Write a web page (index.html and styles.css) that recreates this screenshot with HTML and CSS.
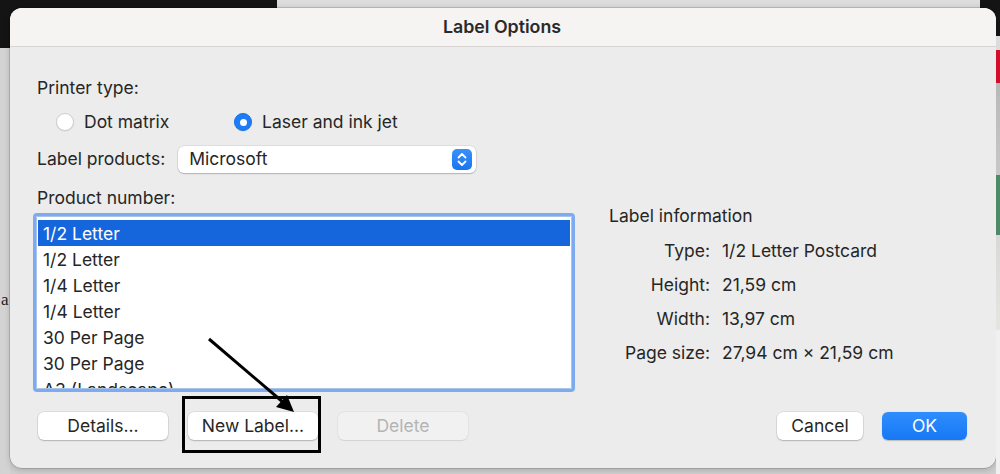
FILE: index.html
```html
<!DOCTYPE html>
<html>
<head>
<meta charset="utf-8">
<title>Label Options</title>
<link rel="stylesheet" href="styles.css">
</head>
<body>
<div class="desk">
  <div class="side-left"><span class="stray">a</span></div>
  <div class="dialog">
    <div class="titlebar">Label Options</div>
    <div class="content">
      <div class="row label-row">Printer type:</div>
      <div class="row radios">
        <label class="radio-opt first"><span class="radio"></span>Dot matrix</label>
        <label class="radio-opt"><span class="radio on"></span>Laser and ink jet</label>
      </div>
      <div class="row products">
        <span>Label products:</span>
        <div class="popup">
          <span class="popup-text">Microsoft</span>
          <span class="stepper">
            <svg width="20" height="21" viewBox="0 0 20 21"><path d="M6.5 8.5 L10 5 L13.5 8.5" fill="none" stroke="#fff" stroke-width="1.8" stroke-linecap="round" stroke-linejoin="round"/><path d="M6.5 12.5 L10 16 L13.5 12.5" fill="none" stroke="#fff" stroke-width="1.8" stroke-linecap="round" stroke-linejoin="round"/></svg>
          </span>
        </div>
      </div>
      <div class="middle">
        <div class="left-col">
          <div class="row label-row">Product number:</div>
          <div class="listbox">
            <div class="list-inner">
              <div class="item sel">1/2 Letter</div>
              <div class="item">1/2 Letter</div>
              <div class="item">1/4 Letter</div>
              <div class="item">1/4 Letter</div>
              <div class="item">30 Per Page</div>
              <div class="item">30 Per Page</div>
              <div class="item">A3 (Landscape)</div>
            </div>
          </div>
        </div>
        <div class="right-col">
          <div class="info-title">Label information</div>
          <div class="info-grid">
            <span class="k">Type:</span><span class="v">1/2 Letter Postcard</span>
            <span class="k">Height:</span><span class="v">21,59 cm</span>
            <span class="k">Width:</span><span class="v">13,97 cm</span>
            <span class="k">Page size:</span><span class="v">27,94 cm × 21,59 cm</span>
          </div>
        </div>
      </div>
      <div class="buttons">
        <div class="btn">Details...</div>
        <div class="btn">New Label...</div>
        <div class="btn disabled">Delete</div>
        <div class="spacer"></div>
        <div class="btn cancel">Cancel</div>
        <div class="btn ok">OK</div>
      </div>
    </div>
  </div>
  <div class="side-right"></div>
</div>
<svg class="annot" width="1000" height="474" viewBox="0 0 1000 474">
  <rect x="183.5" y="397.5" width="136" height="54" fill="none" stroke="#000" stroke-width="3"/>
  <line x1="209" y1="339" x2="284" y2="403" stroke="#000" stroke-width="3"/>
  <path d="M294 412 L276 407 L287 395 Z" fill="#000"/>
</svg>
</body>
</html>
```
FILE: styles.css
```css
html, body {
  margin: 0;
  padding: 0;
}
body {
  width: 1000px;
  height: 474px;
  overflow: hidden;
  position: relative;
  font-family: "Inter", "Liberation Sans", sans-serif;
  color: #262626;
  background:
    linear-gradient(#141414, #141414) 0 0 / 277px 48px no-repeat,
    linear-gradient(#dedede, #d6d6d6) 277px 0 / 703px 8px no-repeat,
    linear-gradient(#141414, #141414) 980px 0 / 20px 36px no-repeat,
    #cfcfcf;
}
.desk {
  display: grid;
  grid-template-columns: 10px 986px 4px;
  height: 474px;
}
.side-left {
  background: linear-gradient(#141414 0, #141414 48px, #d3d3d3 48px, #d3d3d3 100%);
}
.stray {
  display: block;
  margin-top: 290px;
  margin-left: 1px;
  font-family: "Liberation Serif", serif;
  font-size: 17px;
  color: #222;
}
.side-right {
  background: linear-gradient(
    #141414 0, #141414 36px,
    #dcdcdc 36px, #dcdcdc 50px,
    #d0102a 50px, #d0102a 83px,
    #b8b8b8 83px, #c8c8c8 175px,
    #4e8a66 175px, #4e8a66 235px,
    #d8d8d8 235px, #e6e6e0 330px,
    #f0f0f0 330px, #f0f0f0 474px);
}
.dialog {
  margin-top: 8px;
  height: 460px;
  background: #ececec;
  border-radius: 12px;
  box-shadow: 0 0 0 0.5px rgba(0,0,0,0.25), 0 2px 6px rgba(0,0,0,0.18);
  overflow: hidden;
  display: flex;
  flex-direction: column;
}
.titlebar {
  height: 38px;
  line-height: 38px;
  background: #f6f3f3;
  border-bottom: 1px solid #d8d4d4;
  text-align: center;
  font-weight: 600;
  font-size: 17.8px;
  color: #2a2a2a;
  padding-right: 2px;
}
.content {
  flex: 1;
  padding: 29px 29px 0 27px;
  display: flex;
  flex-direction: column;
  font-size: 17.5px;
}
.row {
  height: 24px;
  line-height: 24px;
  display: flex;
  align-items: center;
}
.radios {
  margin-top: 10px;
  padding-left: 19px;
}
.radio-opt {
  display: flex;
  align-items: center;
  gap: 10px;
}
.radio-opt.first {
  width: 178px;
}
.radio {
  width: 18px;
  height: 18px;
  box-sizing: border-box;
  border-radius: 50%;
  background: #fff;
  border: 0.5px solid #cfcfcf;
  box-shadow: 0 0.5px 1px rgba(0,0,0,0.12);
  display: flex;
  align-items: center;
  justify-content: center;
}
.radio.on {
  background: #1b7df7;
  border-color: #1870e6;
}
.radio.on::after {
  content: "";
  width: 7px;
  height: 7px;
  border-radius: 50%;
  background: #fff;
}
.products {
  margin-top: 11px;
  height: 28px;
  gap: 13px;
}
.popup {
  width: 298px;
  height: 27px;
  box-sizing: border-box;
  background: #fff;
  border-radius: 6px;
  box-shadow: 0 0 0 0.5px rgba(0,0,0,0.12), 0 1px 1.5px rgba(0,0,0,0.2);
  display: flex;
  align-items: center;
  padding: 0 4px 0 11px;
}
.popup-text {
  flex: 1;
}
.stepper {
  width: 20px;
  height: 21px;
  border-radius: 5px;
  background: linear-gradient(#3a91fb, #1b74ee);
  display: flex;
}
.middle {
  display: flex;
  margin-top: 13px;
  gap: 34px;
}
.left-col {
  display: flex;
  flex-direction: column;
}
.listbox {
  margin-top: 3px;
  margin-left: -4px;
  width: 542px;
  height: 179px;
  box-sizing: border-box;
  border: 3px solid #7eabef;
  border-radius: 4px;
  background: #fff;
  overflow: hidden;
}
.list-inner {
  height: 100%;
  box-sizing: border-box;
  border: 1px solid #a9c3ea;
  padding-top: 3px;
  overflow: hidden;
}
.item {
  height: 26px;
  line-height: 27px;
  padding-left: 5px;
  margin: 0 1px;
  color: #262626;
}
.item.sel {
  background: #1565dc;
  color: #fff;
}
.right-col {
  padding-top: 18px;
}
.info-title {
  height: 24px;
  line-height: 24px;
}
.info-grid {
  margin-top: 6px;
  display: grid;
  grid-template-columns: 101px auto;
  column-gap: 12px;
  grid-auto-rows: 34px;
  line-height: 34px;
}
.k {
  text-align: right;
}
.buttons {
  margin-top: 20px;
  display: flex;
  gap: 20px;
  margin-left: 1px;
}
.spacer {
  flex: 1;
}
.btn {
  width: 130px;
  height: 28px;
  line-height: 28px;
  box-sizing: border-box;
  text-align: center;
  background: #fff;
  border-radius: 6px;
  box-shadow: 0 0 0 0.5px rgba(0,0,0,0.12), 0 1px 1.5px rgba(0,0,0,0.2);
  color: #262626;
}
.btn.disabled {
  background: #f1f1f1;
  color: #b4b4b4;
  box-shadow: 0 0 0 0.5px rgba(0,0,0,0.06), 0 0.5px 1px rgba(0,0,0,0.08);
}
.btn.cancel {
  width: 86px;
}
.btn.ok {
  width: 85px;
  margin-left: -1px;
  background: linear-gradient(#2f8dfd, #1778f5);
  color: #fff;
  box-shadow: 0 0.5px 1px rgba(0,0,0,0.2);
}
.annot {
  position: absolute;
  left: 0;
  top: 0;
  pointer-events: none;
}
```
